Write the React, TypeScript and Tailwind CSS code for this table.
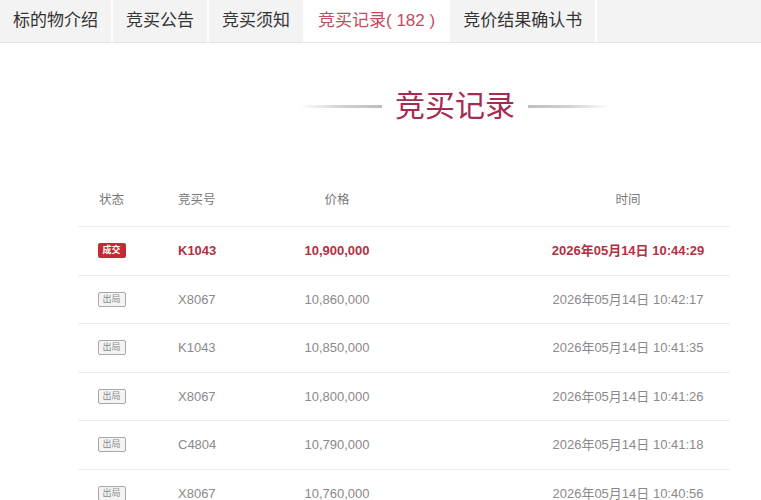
const tabs = ['标的物介绍', '竞买公告', '竞买须知', '竞买记录( 182 )', '竞价结果确认书']

const records = [
  { status: 'done', no: 'K1043', price: '10,900,000', time: '2026年05月14日 10:44:29' },
  { status: 'out', no: 'X8067', price: '10,860,000', time: '2026年05月14日 10:42:17' },
  { status: 'out', no: 'K1043', price: '10,850,000', time: '2026年05月14日 10:41:35' },
  { status: 'out', no: 'X8067', price: '10,800,000', time: '2026年05月14日 10:41:26' },
  { status: 'out', no: 'C4804', price: '10,790,000', time: '2026年05月14日 10:41:18' },
  { status: 'out', no: 'X8067', price: '10,760,000', time: '2026年05月14日 10:40:56' },
]

function Badge({ done }: { done: boolean }) {
  if (done) {
    return (
      <span className="inline-flex h-[15px] w-[28px] items-center justify-center rounded-[2px] bg-[#c42a32] text-[9px] leading-none text-white">
        成交
      </span>
    )
  }
  return (
    <span className="inline-flex h-[15px] w-[28px] items-center justify-center rounded-[2px] border border-[#a8a8a8] bg-[#f4f4f4] text-[9px] leading-none text-[#8a8a8a]">
      出局
    </span>
  )
}

const grid = 'grid grid-cols-[67px_117px_150px_114px_204px] items-center'

export default function App() {
  return (
    <div className="h-[500px] w-[761px] overflow-hidden bg-white font-['Liberation_Sans','Noto_Sans_CJK_SC',sans-serif]">
      <div className="flex h-[43px] border-b border-[#e6e6e6] bg-[#f3f3f3]">
        {tabs.map((t, i) => (
          <div
            key={t}
            className={
              'flex items-center border-r-2 border-white px-[13px] text-[17px] ' +
              (i === 3 ? 'bg-white text-[#c14d5c]' : 'text-[#333]')
            }
          >
            {t}
          </div>
        ))}
      </div>

      <div className="mt-[48px] ml-[300px] flex w-[310px] items-center gap-[13px]">
        <div className="h-[3px] flex-1 bg-gradient-to-r from-white via-[#d2d2d2] to-[#bdbdbd]" />
        <div className="text-[30px] leading-none text-[#a52b50]">竞买记录</div>
        <div className="h-[3px] flex-1 bg-gradient-to-r from-[#bdbdbd] via-[#d2d2d2] to-white" />
      </div>

      <div className="ml-[78px] mt-[54px] w-[652px] text-[13px]">
        <div className={grid + ' h-[52px] border-b border-[#ececec] text-[12.5px] text-[#777]'}>
          <div className="text-center">状态</div>
          <div className="pl-[33px]">竞买号</div>
          <div className="text-center">价格</div>
          <div />
          <div className="text-center">时间</div>
        </div>
        {records.map((r, i) => {
          const done = r.status === 'done'
          const tone = done ? 'font-bold text-[#b3303f]' : 'text-[#8a8a8a]'
          return (
            <div key={i} className={grid + ' h-[48.5px] border-b border-[#ededed] ' + tone}>
              <div className="flex justify-center">
                <Badge done={done} />
              </div>
              <div className="pl-[33px]">{r.no}</div>
              <div className="text-center">{r.price}</div>
              <div />
              <div className="text-center">{r.time}</div>
            </div>
          )
        })}
      </div>
    </div>
  )
}
